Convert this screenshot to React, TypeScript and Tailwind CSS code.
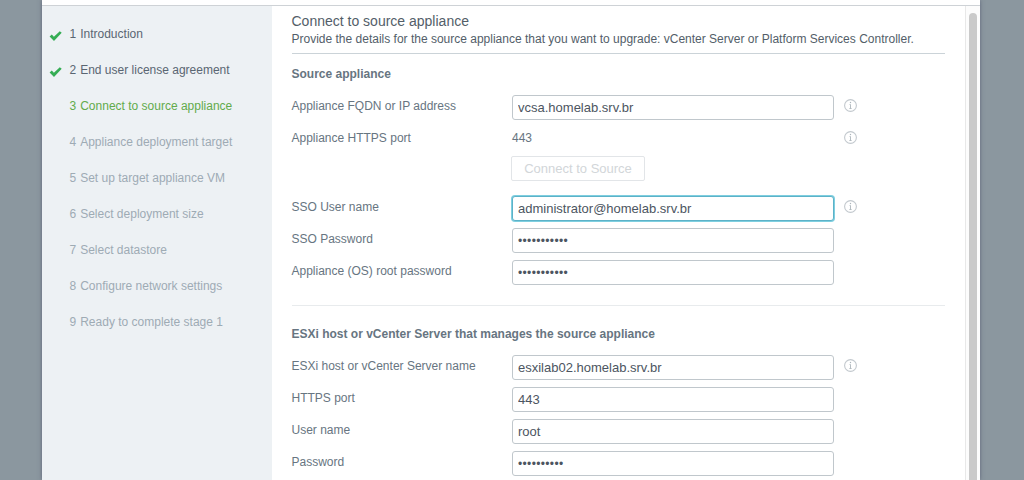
import { clsx } from "clsx";

type StepState = "done" | "current" | "pending";

const steps: { title: string; state: StepState }[] = [
  { title: "Introduction", state: "done" },
  { title: "End user license agreement", state: "done" },
  { title: "Connect to source appliance", state: "current" },
  { title: "Appliance deployment target", state: "pending" },
  { title: "Set up target appliance VM", state: "pending" },
  { title: "Select deployment size", state: "pending" },
  { title: "Select datastore", state: "pending" },
  { title: "Configure network settings", state: "pending" },
  { title: "Ready to complete stage 1", state: "pending" },
];

function CheckIcon() {
  return (
    <svg width="14" height="12" viewBox="0 0 14 12" fill="none">
      <path d="M0.6 6.4 2.8 4.5 4.9 6.8 10.8 1.3 12.7 2.8 5 11.1Z" fill="#35ad54" />
    </svg>
  );
}

function InfoIcon() {
  return (
    <svg className="ml-[10px] mt-[7px] shrink-0" width="13" height="13" viewBox="0 0 13 13" fill="none">
      <circle cx="6.5" cy="6.5" r="5.9" stroke="#c3c9ce" strokeWidth="1.1" />
      <path d="M5.6 5.5h0.9v4M5.4 9.5h2.2" stroke="#adb5bb" strokeWidth="0.9" />
      <circle cx="6.5" cy="3.5" r="0.7" fill="#adb5bb" />
    </svg>
  );
}

function Step({ index, title, state }: { index: number; title: string; state: StepState }) {
  return (
    <li
      className={clsx(
        "flex h-9 items-center text-[12px]",
        state === "done" && "text-[#5a6672]",
        state === "current" && "text-[#62ab4b]",
        state === "pending" && "text-[#9eabb4]",
      )}
    >
      <span className="w-5 shrink-0 pt-[3px]">{state === "done" && <CheckIcon />}</span>
      <span className="w-[10.8px] shrink-0">{index}</span>
      <span className="whitespace-nowrap">{title}</span>
    </li>
  );
}

interface FieldProps {
  label: string;
  value: string;
  kind?: "text" | "password" | "static";
  info?: boolean;
  focused?: boolean;
}

function Field({ label, value, kind = "text", info, focused }: FieldProps) {
  return (
    <div className="flex h-8 items-start">
      <label className="w-[220.5px] shrink-0 pt-[6px] leading-4 whitespace-nowrap">{label}</label>
      {kind === "static" ? (
        <span className="w-[322px] pt-[6px] leading-4">{value}</span>
      ) : (
        <input
          type={kind}
          defaultValue={value}
          aria-label={label}
          className={clsx(
            "mt-[3px] h-[25px] w-[322px] rounded-[3px] border bg-white px-[5px] text-[#4c5561] outline-none",
            kind === "password" ? "text-[12px] tracking-[0.35px]" : "text-[13px]",
            focused ? "border-[#5cb2c8] shadow-[0_0_0_1px_#7fcfe0]" : "border-[#c0c7cc]",
          )}
        />
      )}
      {info && <InfoIcon />}
    </div>
  );
}

export default function App() {
  return (
    <div className="flex h-[480px] w-[1024px] justify-center overflow-hidden bg-[#8b979f] pr-[2px] font-['Liberation_Sans',Arial,sans-serif] text-[12px]">
      <div className="flex w-[938px] flex-col bg-white shadow-[0_0_4px_rgba(75,80,105,0.7)]">
        <header className="h-[6px] shrink-0 border-b border-[#ced2d6] bg-white" />
        <div className="flex min-h-0 flex-1">
          <nav className="w-[230px] shrink-0 bg-[#edf1f4] pt-[10px] pl-[7.4px]">
            <ol>
              {steps.map((step, i) => (
                <Step key={step.title} index={i + 1} title={step.title} state={step.state} />
              ))}
            </ol>
          </nav>
          <main className="min-w-0 flex-1 overflow-hidden pr-5 pl-[19.5px] text-[#677581]">
            <header className="h-12 border-b border-[#cbd3d8] pt-[7px] text-[#535e69]">
              <h1 className="text-[14px] leading-4">Connect to source appliance</h1>
              <p className="mt-[2px] leading-4 whitespace-nowrap">
                Provide the details for the source appliance that you want to upgrade: vCenter Server or
                Platform Services Controller.
              </p>
            </header>
            <section className="h-[251px] pt-3">
              <h2 className="h-[26px] leading-4 font-bold">Source appliance</h2>
              <Field label="Appliance FQDN or IP address" value="vcsa.homelab.srv.br" info />
              <Field label="Appliance HTTPS port" value="443" kind="static" info />
              <button
                type="button"
                disabled
                className="mb-3 ml-[219.5px] block h-[25px] w-[134px] rounded-[2px] border border-[#e2e5e8] text-[13px] text-[#d2d6d9]"
              >
                Connect to Source
              </button>
              <Field label="SSO User name" value="administrator@homelab.srv.br" info focused />
              <Field label="SSO Password" value="vmware12345" kind="password" />
              <Field label="Appliance (OS) root password" value="vmware12345" kind="password" />
            </section>
            <section className="border-t border-[#e8ebed] pt-5">
              <h2 className="h-[26px] leading-4 font-bold">
                ESXi host or vCenter Server that manages the source appliance
              </h2>
              <Field label="ESXi host or vCenter Server name" value="esxilab02.homelab.srv.br" info />
              <Field label="HTTPS port" value="443" />
              <Field label="User name" value="root" />
              <Field label="Password" value="vmware1234" kind="password" />
            </section>
          </main>
          <div className="flex w-[15px] shrink-0 justify-center border-l border-[#e8e8e8] bg-[#fcfcfc] pt-[7px]">
            <div className="h-full w-2 rounded-t-full bg-[#cacaca]" />
          </div>
        </div>
      </div>
    </div>
  );
}
